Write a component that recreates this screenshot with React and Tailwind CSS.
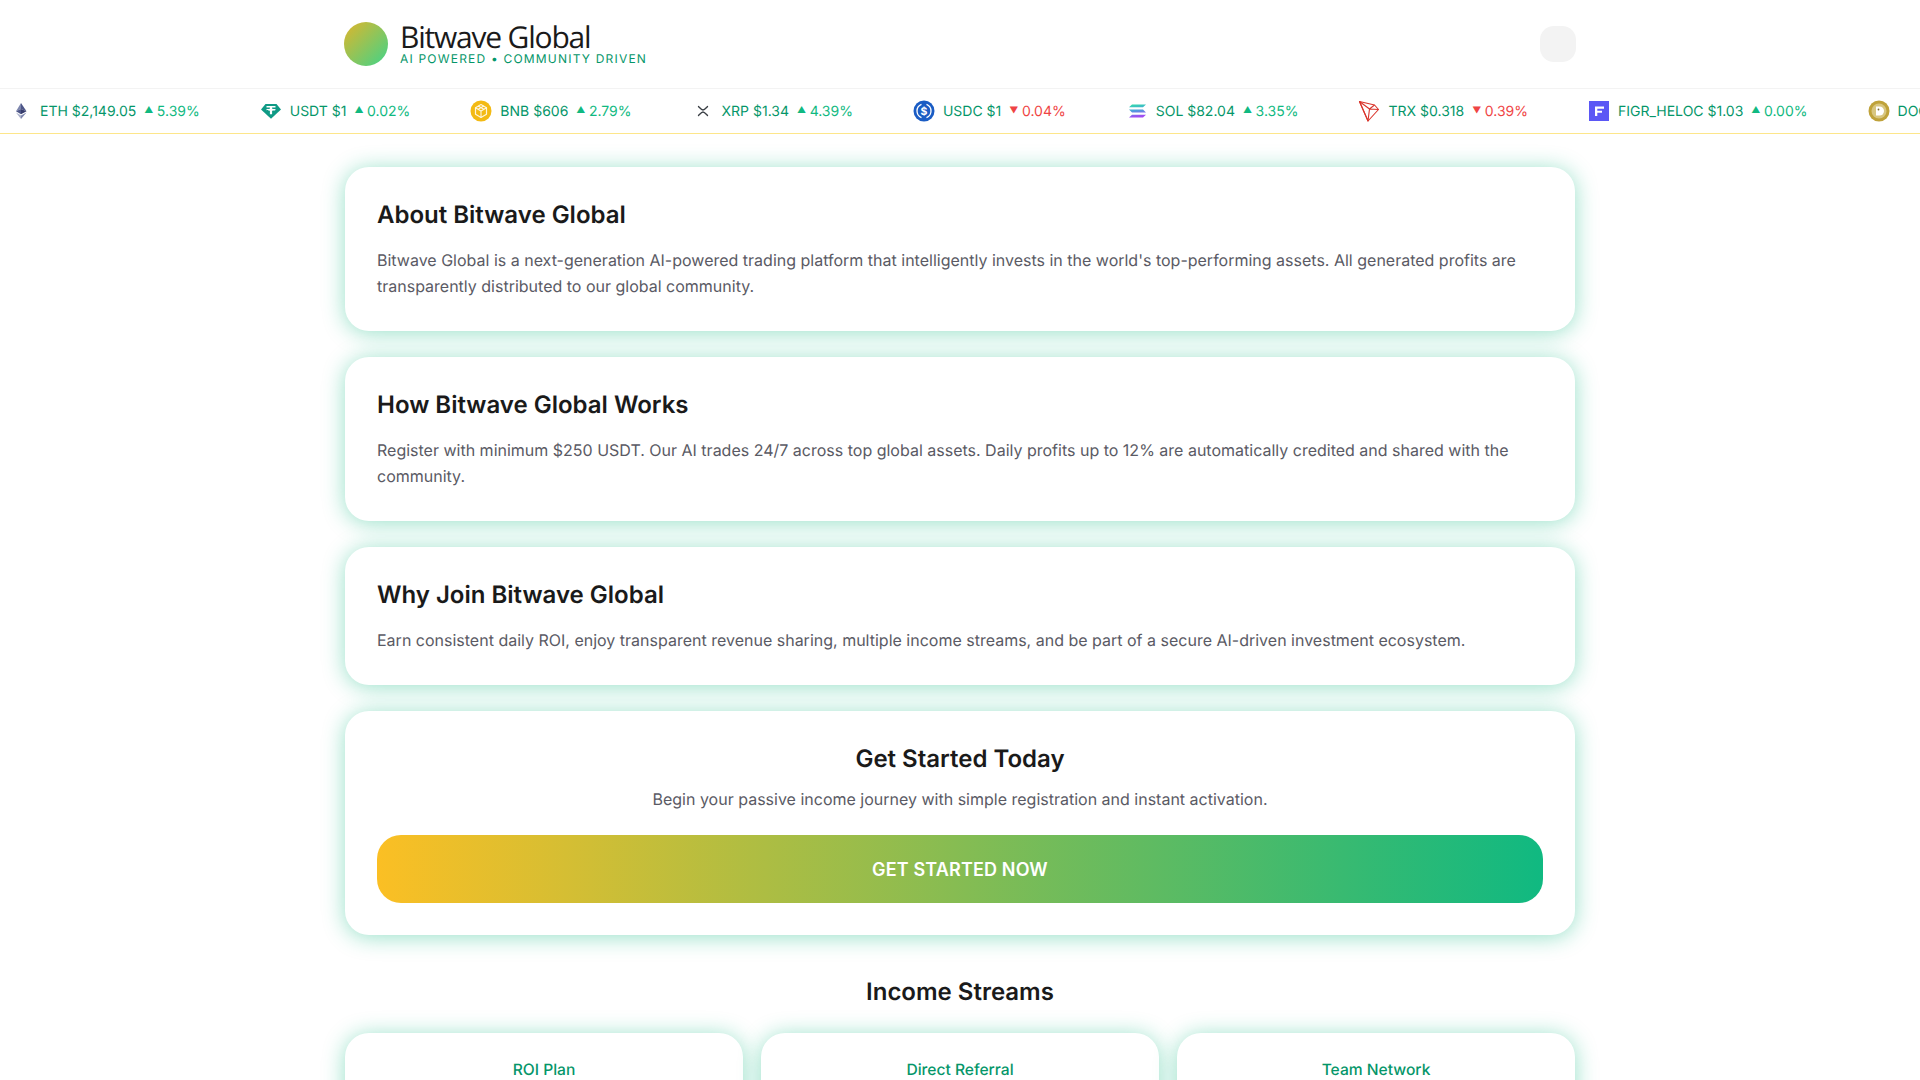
const coins = [
  { name: 'ETH $2,149.05', pct: '5.39%', up: true, icon: <EthIcon /> },
  { name: 'USDT $1', pct: '0.02%', up: true, icon: <UsdtIcon /> },
  { name: 'BNB $606', pct: '2.79%', up: true, icon: <BnbIcon /> },
  { name: 'XRP $1.34', pct: '4.39%', up: true, icon: <XrpIcon /> },
  { name: 'USDC $1', pct: '0.04%', up: false, icon: <UsdcIcon /> },
  { name: 'SOL $82.04', pct: '3.35%', up: true, icon: <SolIcon /> },
  { name: 'TRX $0.318', pct: '0.39%', up: false, icon: <TrxIcon /> },
  { name: 'FIGR_HELOC $1.03', pct: '0.00%', up: true, icon: <FigrIcon /> },
  { name: 'DOGE $0.09', pct: '4.10%', up: true, icon: <DogeIcon /> },
];

function EthIcon() {
  return (
    <svg viewBox="0 0 22 22" className="w-[22px] h-[22px]">
      <path d="M11 3 6 11.200 11 9z" fill="#7d86ad" />
      <path d="M11 3 16.500 11.200 11 9z" fill="#4d5688" />
      <path d="M6 11.200 11 9 11 14.200z" fill="#4d5688" />
      <path d="M16.500 11.200 11 9 11 14.200z" fill="#353b6b" />
      <path d="M6 12.400 11 19 11 15.400z" fill="#a9afca" />
      <path d="M16.500 12.400 11 19 11 15.400z" fill="#7d86ad" />
    </svg>
  );
}

function UsdtIcon() {
  return (
    <svg viewBox="0 0 22 22" className="w-[22px] h-[22px]">
      <path d="M5.500 4h11L21 9.500 11 18.800 1 9.500z" fill="#0f9a85" />
      <path d="M6.500 6h9v1.600h-3.400v1.100c2 .1 3.800.5 3.800 1s-1.800.9-3.800 1v3.500H9.900v-3.500c-2-.1-3.800-.5-3.800-1s1.800-.9 3.800-1V7.600H6.500z" fill="#fff" />
    </svg>
  );
}

function BnbIcon() {
  return (
    <svg viewBox="0 0 22 22" className="w-[22px] h-[22px]">
      <circle cx="11" cy="11" r="10.500" fill="#f3ba14" />
      <path d="M11 4.500 16.500 7.700V14.300L11 17.500 5.500 14.300V7.700z" fill="none" stroke="#fff" strokeOpacity="0.85" strokeWidth="1.200" strokeLinejoin="round" />
      <path d="M5.500 7.700 11 11 16.500 7.700M11 11V17.500M8.200 6.100 13.800 9.300M13.800 6.100 8.200 9.300" fill="none" stroke="#fff" strokeOpacity="0.85" strokeWidth="1.100" />
    </svg>
  );
}

function XrpIcon() {
  return (
    <svg viewBox="0 0 22 22" className="w-[22px] h-[22px]" fill="none" stroke="#3a3f45" strokeWidth="1.400" strokeLinecap="round">
      <path d="M6.500 6.500c2 2 3.200 3.500 4.500 3.500s2.500-1.500 4.500-3.500" />
      <path d="M6.500 15.500c2-2 3.200-3.500 4.500-3.500s2.500 1.500 4.500 3.500" />
    </svg>
  );
}

function UsdcIcon() {
  return (
    <svg viewBox="0 0 22 22" className="w-[22px] h-[22px]">
      <circle cx="11" cy="11" r="10.500" fill="#1a5cc4" />
      <path d="M8.500 4.400a7.100 7.100 0 0 0 0 13.200M13.500 4.400a7.100 7.100 0 0 1 0 13.200" fill="none" stroke="#fff" strokeWidth="1.300" />
      <text x="11" y="14.700" textAnchor="middle" fontSize="10.500" fontWeight="700" fill="#fff" fontFamily="Inter, sans-serif">$</text>
    </svg>
  );
}

function SolIcon() {
  return (
    <svg viewBox="0 0 22 22" className="w-[22px] h-[22px]">
      <defs>
        <linearGradient id="solGrad" x1="0" y1="0" x2="0.200" y2="1">
          <stop offset="0" stopColor="#2fe0a8" />
          <stop offset="0.500" stopColor="#4aa0dc" />
          <stop offset="1" stopColor="#a24bf2" />
        </linearGradient>
      </defs>
      <path d="M6 4.500h14l-3 2.800H3zM3 9.600h14l3 2.800H6zM6 14.700h14l-3 2.800H3z" fill="url(#solGrad)" />
    </svg>
  );
}

function TrxIcon() {
  return (
    <svg viewBox="0 0 22 22" className="w-[22px] h-[22px]" fill="none" stroke="#d9342b" strokeWidth="1.100" strokeLinejoin="round">
      <path d="M1.500 1.500 16.500 5 20.500 9.500 10 21z" />
      <path d="M1.500 1.500 10 21 11.500 9zM11.500 9 20.500 9.500M11.500 9 16.500 5" />
    </svg>
  );
}

function FigrIcon() {
  return (
    <svg viewBox="0 0 22 22" className="w-[22px] h-[22px]">
      <rect x="1" y="1" width="20" height="20" fill="#5b57f5" />
      <path d="M7 6.500h9v2.200H9.300v2H14v2H9.300v3.300H7z" fill="#fff" />
    </svg>
  );
}

function DogeIcon() {
  return (
    <svg viewBox="0 0 22 22" className="w-[22px] h-[22px]">
      <circle cx="11" cy="11" r="10.500" fill="#bfa23a" />
      <circle cx="11" cy="11" r="7.500" fill="#d8c680" />
      <path d="M8 6.500h3.500a4.500 4.500 0 0 1 0 9H8z" fill="#fff" />
      <circle cx="10.500" cy="9.500" r="0.900" fill="#7a6a30" />
    </svg>
  );
}

function Ticker() {
  return (
    <div className="h-[46px] shrink-0 flex items-center overflow-hidden border-b border-[#fde68a] border-t border-t-[#f3f3f3] whitespace-nowrap pl-[10px]">
      {coins.map((c) => (
        <div key={c.name} className="flex items-center shrink-0 mr-[60px]">
          {c.icon}
          <span className="ml-2 text-[14px] text-[#059669]">{c.name}</span>
          <span className={`ml-2 flex items-center text-[14px] ${c.up ? 'text-[#10b981]' : 'text-[#ef4444]'}`}>
            <span className="text-[9px] mr-[3.5px]">{c.up ? '▲' : '▼'}</span>
            {c.pct}
          </span>
        </div>
      ))}
    </div>
  );
}

const cardShadow = 'shadow-[0_2px_22px_rgba(16,185,129,0.44)]';

function Card({ title, children, center }) {
  return (
    <section className={`bg-white rounded-3xl ${cardShadow} p-8 ${center ? 'text-center' : ''}`}>
      <h2 className={`text-[24px] leading-[32px] font-semibold text-[#1a1a1a] ${center ? 'mb-[11px]' : 'mb-4'}`}>{title}</h2>
      {children}
    </section>
  );
}

const bodyText = 'text-[16px] leading-[26px] text-[#5a5a64]';

export default function App() {
  return (
    <div className="h-screen overflow-hidden bg-white font-['Inter',sans-serif] [text-rendering:geometricPrecision] flex flex-col">
      <header className="h-[88px] shrink-0 flex justify-center">
        <div className="w-[1232px] flex items-center justify-between">
          <div className="flex items-center gap-3">
            <div className="w-[44px] h-[44px] rounded-full bg-[linear-gradient(135deg,#e0b52a,#3fd48a)]"></div>
            <div>
              <div className="font-['Open_Sans',sans-serif] text-[30px] leading-[30px] tracking-[-1.2px] text-[#1a1a1a]">Bitwave Global</div>
              <div className="text-[12px] leading-[14px] tracking-[1.2px] text-[#059669] uppercase">AI Powered • Community Driven</div>
            </div>
          </div>
          <div className="w-9 h-9 rounded-[14px] bg-[#f3f3f3]"></div>
        </div>
      </header>
      <Ticker />
      <main className="w-[1230px] mx-auto pt-[33px] flex flex-col gap-[26px]">
        <Card title="About Bitwave Global">
          <p className={bodyText}>Bitwave Global is a next-generation AI-powered trading platform that intelligently invests in the world's top-performing assets. All generated profits are transparently distributed to our global community.</p>
        </Card>
        <Card title="How Bitwave Global Works">
          <p className={bodyText}>Register with minimum $250 USDT. Our AI trades 24/7 across top global assets. Daily profits up to 12% are automatically credited and shared with the community.</p>
        </Card>
        <Card title="Why Join Bitwave Global">
          <p className={bodyText}>Earn consistent daily ROI, enjoy transparent revenue sharing, multiple income streams, and be part of a secure AI-driven investment ecosystem.</p>
        </Card>
        <Card title="Get Started Today" center>
          <p className={bodyText}>Begin your passive income journey with simple registration and instant activation.</p>
          <button className="w-full h-[68px] mt-[23px] rounded-3xl bg-[linear-gradient(90deg,#fbbf24,#10b981)] text-white text-[18px] font-semibold tracking-[0.15px]">GET STARTED NOW</button>
        </Card>
        <h2 className="text-[24px] leading-[32px] font-semibold text-[#1a1a1a] text-center mt-[15px] mb-[-1px]">Income Streams</h2>
        <div className="grid grid-cols-3 gap-[18px]">
          {['ROI Plan', 'Direct Referral', 'Team Network'].map((t) => (
            <div key={t} className={`bg-white rounded-3xl ${cardShadow} pt-[25px] px-6 h-[200px] text-center text-[15.6px] leading-6 font-medium text-[#059669]`}>{t}</div>
          ))}
        </div>
      </main>
    </div>
  );
}
